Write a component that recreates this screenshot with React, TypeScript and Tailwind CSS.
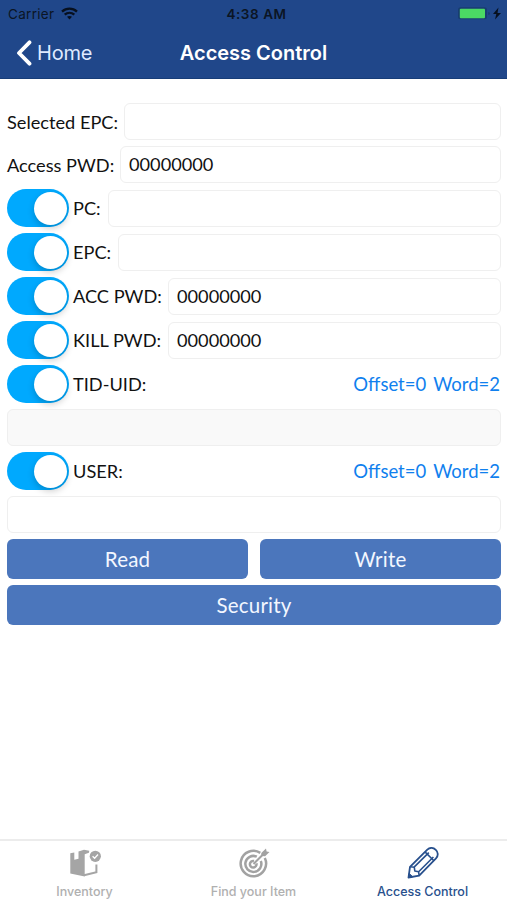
import { useState } from "react"

function Toggle() {
  const [on, setOn] = useState(true)

  return (
    <button
      type="button"
      role="switch"
      aria-checked={on}
      onClick={() => setOn(!on)}
      className={`flex h-[38px] w-[62px] shrink-0 items-center rounded-full px-[2px] ${on ? "justify-end bg-[#00a9fe]" : "justify-start bg-gray-200"}`}
    >
      <span className="size-[33px] rounded-full bg-white shadow-[0_3px_7px_rgba(0,0,0,0.2)]" />
    </button>
  )
}

function Field({ value = "", label, disabled = false }: { value?: string; label: string; disabled?: boolean }) {
  return (
    <input
      aria-label={label}
      defaultValue={value}
      disabled={disabled}
      className="h-[37px] w-full min-w-0 flex-1 rounded-[6px] border border-[#efefef] bg-white px-2 pb-px text-[18.2px] text-[#111] outline-none disabled:bg-[#f9f9f9]"
    />
  )
}

function Range() {
  return (
    <div className="ml-auto flex gap-[7px] pr-px pt-[2px] text-[18.5px] text-[#1080ee]">
      <span>Offset=0</span>
      <span>Word=2</span>
    </div>
  )
}

function StatusBar() {
  return (
    <div className="grid h-[27px] grid-cols-3 items-center pl-2 pr-[5px] text-[13.5px] text-[#0b1524]">
      <div className="flex items-center gap-[7px]">
        <span className="pt-px tracking-[0.3px]">Carrier</span>
        <svg width="17" height="13" viewBox="0 0 17 13" fill="none" stroke="#07101f" strokeWidth="2.3">
          <path d="M1 4.7C5.3.7 11.7.7 16 4.7" />
          <path d="M3.7 7.7c2.8-2.5 6.8-2.5 9.6 0" />
          <path d="M6 9.8c1.5-1.2 3.5-1.2 5 0L8.5 12.4Z" fill="#07101f" stroke="none" />
        </svg>
      </div>
      <span className="pl-[3px] pt-px text-center font-semibold tracking-[0.55px]">4:38 AM</span>
      <div className="flex items-center justify-end">
        <svg width="45" height="15" viewBox="0 0 45 15">
          <rect x="1" y="1.3" width="29" height="12" rx="2.5" fill="#183d70" />
          <rect x="2.8" y="2.8" width="25.2" height="9.4" rx="1" fill="#4bd964" />
          <path d="M31.5 6v3c1.5-.5 1.5-2.5 0-3Z" fill="#153461" />
          <path d="M41.5 1.5 36 8h3.3l-1.3 5.5L44 7h-3.5Z" fill="#07101f" />
        </svg>
      </div>
    </div>
  )
}

function BoxIcon() {
  return (
    <svg width="34" height="30" viewBox="0 0 34 30" fill="#a5a5a5">
      <path d="M2.3 5.2 6.3 4.4v7.4l4.2-1V3.4L16 1.8l5.3 1-.4 2-4.2 1.4V28.5L2.3 25.4Z" />
      <path d="M16 27.2 28.4 24.2V16.5" fill="none" stroke="#a5a5a5" strokeWidth="2" />
      <circle cx="27.3" cy="8.3" r="5.6" />
      <path d="m24.6 8.3 2 2 3.4-3.8" fill="none" stroke="white" strokeWidth="1.3" />
    </svg>
  )
}

function TargetIcon() {
  return (
    <svg width="32" height="31" viewBox="0 0 32 31" fill="none" stroke="#a2a2a2">
      <path d="M22.3 4.9A12.7 12.7 0 1 0 26.8 10" strokeWidth="2.5" />
      <path d="M18.8 8.7a8 8 0 1 0 4 4.3" strokeWidth="2.5" />
      <path d="M16 13a3.3 3.3 0 1 0 2.4 2.4" strokeWidth="2.5" />
      <path d="m15.5 16 9.5-9.5" strokeWidth="2" />
      <path d="M23.3 8V5L28 .4l.6 3 2.9.6-4.4 4.3Z" fill="#a2a2a2" stroke="none" />
    </svg>
  )
}

function PencilIcon() {
  return (
    <svg width="32" height="32" viewBox="0 0 32 32" fill="none" stroke="#28508d" strokeWidth="1.8" strokeLinejoin="round">
      <path d="M1.5 30.5 3 19.8 20.3 2.6c2.8-2.6 6.2-2 8.5.2s2.8 5.8.2 8.5L12.2 28.6Z" />
      <path d="m3 19.8 4.3.4.5 3.8 3.8.8.6 3.8M6.8 20.4 21.8 5.6M11.4 25 26.4 10M18 4.9l8.9 8.9" strokeWidth="1.6" />
      <path d="m1.5 30.5.6-4.2 3.6 3.5Z" fill="#28508d" strokeWidth="1" />
    </svg>
  )
}

const switchRows = [
  { label: "PC:", width: "w-[35px]", field: true, value: "" },
  { label: "EPC:", width: "w-[45px]", field: true, value: "" },
  { label: "ACC PWD:", width: "w-[95px]", field: true, value: "00000000" },
  { label: "KILL PWD:", width: "w-[95px]", field: true, value: "00000000" },
  { label: "TID-UID:", width: "w-[94px]", field: false, value: "" },
]

const tabs = [
  { label: "Inventory", icon: <BoxIcon />, active: false },
  { label: "Find your Item", icon: <TargetIcon />, active: false },
  { label: "Access Control", icon: <PencilIcon />, active: true },
]

const buttonClass = "flex h-10 items-center justify-center rounded-[6px] bg-[#4b76bc] text-[20.5px] tracking-[0.2px] text-[#f3f7ff]"

export default function App() {
  return (
    <div className="flex h-[900px] w-[507px] flex-col overflow-hidden bg-white font-['Lato',sans-serif] text-[#111]">
      <header className="h-[79px] shrink-0 border-b border-[#173d78] bg-[#20478a] font-['Inter',sans-serif]">
        <StatusBar />
        <div className="grid h-[51px] grid-cols-[1fr_auto_1fr] items-center pl-4 pr-4">
          <button type="button" className="flex items-center gap-[5px] text-[20px] text-[#dfeaff]">
            <svg width="16" height="26" viewBox="0 0 16 26" fill="none" stroke="white" strokeWidth="3.8" strokeLinejoin="round" strokeLinecap="round">
              <path d="M13.5 2.3 3 13l10.5 10.7" />
            </svg>
            <span className="tracking-[-0.2px]">Home</span>
          </button>
          <h1 className="text-[20px] font-semibold text-white">Access Control</h1>
        </div>
      </header>

      <main className="flex flex-1 flex-col gap-[6px] pl-[7px] pr-[6px] pt-6 text-[18.2px]">
        <div className="flex items-center">
          <span className="w-[117px] shrink-0 whitespace-nowrap pt-[2px]">Selected EPC:</span>
          <Field label="Selected EPC" />
        </div>
        <div className="flex items-center">
          <span className="w-[113px] shrink-0 whitespace-nowrap pt-[2px]">Access PWD:</span>
          <Field label="Access PWD" value="00000000" />
        </div>
        {switchRows.map((row) => (
          <div key={row.label} className="flex h-[38px] items-center">
            <Toggle />
            <span className={`ml-1 shrink-0 whitespace-nowrap pt-[2px] ${row.width}`}>{row.label}</span>
            {row.field ? <Field label={row.label} value={row.value} /> : <Range />}
          </div>
        ))}
        <div className="flex">
          <Field label="TID-UID" disabled />
        </div>
        <div className="flex h-[38px] items-center">
          <Toggle />
          <span className="ml-1 pt-[2px]">USER:</span>
          <Range />
        </div>
        <div className="flex">
          <Field label="USER" />
        </div>
        <div className="grid grid-cols-2 gap-3">
          <button type="button" className={buttonClass}>Read</button>
          <button type="button" className={buttonClass}>Write</button>
        </div>
        <button type="button" className={buttonClass}>Security</button>
      </main>

      <nav className="grid h-[61px] shrink-0 grid-cols-3 border-t-2 border-[#ececec] font-['Inter',sans-serif]">
        {tabs.map((tab) => (
          <button
            key={tab.label}
            type="button"
            className={`flex flex-col items-center pt-[6px] text-[12.5px] font-medium ${tab.active ? "text-[#28508d]" : "text-[#b0b0b0]"}`}
          >
            <span className="flex h-8 items-center">{tab.icon}</span>
            <span className="mt-[5px] leading-4">{tab.label}</span>
          </button>
        ))}
      </nav>
    </div>
  )
}
